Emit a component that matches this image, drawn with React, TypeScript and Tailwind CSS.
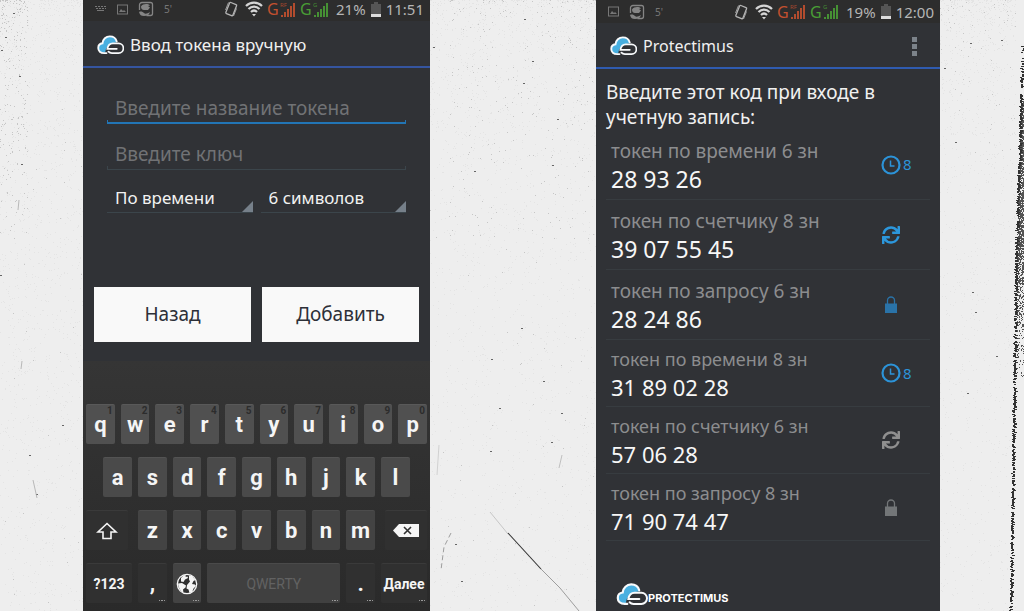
import type { ReactNode } from "react";
import { FaSync } from "react-icons/fa";
import { clsx } from "clsx";

// ──────────────────────────────────────────────────────────────────
// Data
// ──────────────────────────────────────────────────────────────────

type TokenKind = "time" | "counter" | "request";

interface Token {
  label: string;
  code: string;
  kind: TokenKind;
  active: boolean;
}

const largeTokens: Token[] = [
  { label: "токен по времени 6 зн", code: "28 93 26", kind: "time", active: true },
  { label: "токен по счетчику 8 зн", code: "39 07 55 45", kind: "counter", active: true },
  { label: "токен по запросу 6 зн", code: "28 24 86", kind: "request", active: true },
];

const compactTokens: Token[] = [
  { label: "токен по времени 8 зн", code: "31 89 02 28", kind: "time", active: true },
  { label: "токен по счетчику 6 зн", code: "57 06 28", kind: "counter", active: false },
  { label: "токен по запросу 8 зн", code: "71 90 74 47", kind: "request", active: false },
];

// ──────────────────────────────────────────────────────────────────
// Paper background
// ──────────────────────────────────────────────────────────────────

function createRandom(seed: number) {
  let s = seed;
  return () => {
    s = (s * 16807) % 2147483647;
    return s / 2147483647;
  };
}

// Scatters 1px specks in a box, denser towards its top
function specks(seed: number, count: number, x: number, y: number, w: number, h: number, bias = 1) {
  const rnd = createRandom(seed);
  let d = "";
  for (let i = 0; i < count; i++) {
    const px = x + Math.floor(rnd() * w);
    const py = y + Math.floor(Math.pow(rnd(), bias) * h);
    d += `M${px} ${py}h1v1h-1z`;
  }
  return d;
}

// The torn black edge that runs down the right side
function tornEdge() {
  const rnd = createRandom(77);
  let line = "";
  let fill = "";
  for (let y = 44; y < 611; y += 1) {
    const edge = y < 230 ? 1022 - (y - 44) * 0.029 : 1016 - (y - 230) * 0.015;
    const left = Math.round(edge + rnd() * 2 - 1);
    if (rnd() > (y < 95 ? 0.5 : 0.15)) {
      line += `M${left} ${y}h${rnd() > 0.5 ? 3 : 2}v1h-3z`;
    }
    if (y > 100 && y < 385) {
      const density = y < 260 ? 0.75 : 0.6 * (1 - (y - 260) / 125);
      for (let x = left + 2; x < 1024; x++) {
        if (rnd() < density) fill += `M${x} ${y}h1v1h-1z`;
      }
    }
  }
  return { line, fill };
}

const faintSpecks =
  specks(11, 1500, 0, 0, 83, 611, 1.5) +
  specks(12, 2200, 430, 0, 166, 611, 1.7) +
  specks(13, 1300, 940, 0, 76, 611, 1.8);
const greySpecks =
  specks(21, 200, 0, 0, 28, 240, 1.8) +
  specks(22, 240, 450, 0, 146, 240, 1.5) +
  specks(23, 40, 430, 200, 166, 411) +
  specks(24, 60, 940, 0, 76, 160, 1.6) +
  specks(25, 30, 0, 80, 83, 530);
const edge = tornEdge();

const darkSpots = [
  [19, 76], [5, 37], [1, 50], [13, 13], [21, 164], [0, 275], [29, 455], [36, 494], [62, 425],
  [433, 47], [474, 171], [524, 19], [523, 83], [557, 119], [552, 165], [521, 328], [491, 359],
  [561, 413], [551, 442], [490, 451], [499, 408], [543, 381], [461, 581], [455, 544], [532, 61],
  [944, 68], [970, 43], [1001, 40], [955, 142], [972, 292], [975, 312], [996, 356], [967, 393],
];

function PaperTexture() {
  return (
    <svg
      aria-hidden="true"
      viewBox="0 0 1024 611"
      preserveAspectRatio="none"
      className="absolute inset-0 h-full w-full"
      shapeRendering="crispEdges"
    >
      <path d={faintSpecks} fill="#e4e4e4" />
      <path d={greySpecks} fill="#c6c6c6" />
      <path d={edge.fill} fill="#555" />
      <path d={edge.line} fill="#333" />
      {darkSpots.map(([x, y]) => (
        <rect key={`${x}-${y}`} x={x} y={y} width="2" height="1" fill="#666" />
      ))}
      <g fill="none" shapeRendering="auto">
        <path d="M490 512L508 534" stroke="#b5b5b5" strokeWidth="0.7" />
        <path d="M508 533L541 569" stroke="#333" strokeWidth="1.1" />
        <path d="M541 569L560 588L579 611" stroke="#888" strokeWidth="0.8" />
        <path d="M451 533L444 547L441 570" stroke="#888" strokeWidth="0.8" strokeDasharray="5 3" />
        <path d="M439 445L437 475" stroke="#c4c4c4" strokeWidth="0.7" />
        <path d="M562 455L559 468" stroke="#aaa" strokeWidth="0.7" />
        <path d="M19 200L18 210M22 361L21 369M33 480L37 498" stroke="#aaa" strokeWidth="0.8" />
      </g>
    </svg>
  );
}

// ──────────────────────────────────────────────────────────────────
// Icons
// ──────────────────────────────────────────────────────────────────

function CloudLogo({ className }: { className: string }) {
  return (
    <svg viewBox="0 0 30 22" className={className} fill="none" aria-hidden="true">
      <path
        d="M8 19.500C4 19.500 1.500 17.500 1.500 14.300c0-2.900 2-4.900 4.600-5.200C6.500 4.500 10 1.500 14.200 1.500c4.200 0 7.400 2.700 7.900 6.500l-6 1-6 6-1 4z"
        fill="#48afe0"
      />
      <path
        d="M10.500 20H8c-4.200 0-6.600-2.300-6.600-5.700 0-2.900 2-4.900 4.700-5.200C6.500 4.500 10 1.400 14.200 1.400c3.800 0 6.800 2.200 7.700 5.600"
        stroke="#f8fafc"
        strokeWidth="2.100"
        strokeLinecap="round"
      />
      <path d="M18 10h6a4.600 4.600 0 0 1 0 10h-9l-3-4z" fill="#303236" />
      <path
        d="M22 15.300H11.500c.7-3.800 2.900-6 6-6H24a5.300 5.300 0 0 1 0 10.700h-7.500c-1.600 0-2.800-.5-3.800-1.600"
        stroke="#f8fafc"
        strokeWidth="1.900"
        strokeLinecap="round"
      />
    </svg>
  );
}

function SignalBars({ tag, className }: { tag: string; className: string }) {
  return (
    <svg viewBox="0 0 17 17" className={clsx("h-[17px] w-[17px]", className)} fill="currentColor" aria-hidden="true">
      <text x="0" y="6" fontSize="6" fontFamily="Noto Sans, sans-serif" opacity="0.8">
        {tag}
      </text>
      <path d="M1 14h2v2H1zM4 11h2v5H4zM7 8h2v8H7zM10 5h2v11h-2zM13 2h2v14h-2z" opacity="0.9" />
    </svg>
  );
}

function ClockIcon() {
  return (
    <svg viewBox="0 0 20 20" className="size-5" fill="none" stroke="currentColor" aria-hidden="true">
      <circle cx="10" cy="10" r="8.500" strokeWidth="2.200" />
      <path d="M9.500 5.500V11h4" strokeWidth="1.500" />
    </svg>
  );
}

function LockIcon({ className }: { className: string }) {
  return (
    <svg viewBox="0 0 12 17" className={className} aria-hidden="true">
      <path d="M2.500 8V4.500a3.500 3.500 0 0 1 7 0V8" fill="none" stroke="currentColor" strokeWidth="1.300" />
      <path d="M0 7.500h12V17H0z" fill="currentColor" />
    </svg>
  );
}

function TokenIcon({ kind, active }: { kind: TokenKind; active: boolean }) {
  if (kind === "time") {
    return (
      <span className="flex items-center gap-[2px] text-[15px] text-[#2c93d8]">
        <ClockIcon />8
      </span>
    );
  }
  if (kind === "counter") {
    return <FaSync className={clsx("mx-px size-[18px]", active ? "text-[#2c97dc]" : "text-[#8f8f8f]")} />;
  }
  return <LockIcon className={clsx("mx-1 h-[17px] w-3", active ? "text-[#2a73a8]" : "text-[#737678]")} />;
}

// ──────────────────────────────────────────────────────────────────
// Status bar
// ──────────────────────────────────────────────────────────────────

function StatusBar({ battery, time, keyboard, className }: { battery: string; time: string; keyboard?: boolean; className: string }) {
  return (
    <div className={clsx("flex items-center justify-between bg-[#2d2d2d] pr-[6px] pl-3 text-[#b5b5b5]", className)}>
      <div className="flex items-center gap-[10px] text-[#777]">
        {keyboard && (
          <svg viewBox="0 0 12 8" className="h-2 w-3" fill="currentColor" aria-hidden="true">
            <path d="M0 1h2v1H0zM3 1h2v1H3zM6 1h2v1H6zM9 1h2v1H9zM1 3h2v1H1zM4 3h2v1H4zM7 3h2v1H7zM10 3h1v1h-1zM2 5h7v1H2z" />
          </svg>
        )}
        <svg viewBox="0 0 11 11" className="size-[11px]" fill="none" aria-hidden="true">
          <rect x="0.500" y="1" width="10" height="9" stroke="currentColor" />
          <path d="M2 8l2-3 2 2 1-1 2 2z" fill="currentColor" />
        </svg>
        <svg viewBox="0 0 16 16" className="size-4" fill="none" aria-hidden="true">
          <path d="M4 1.500h8.500a2 2 0 0 1 2 2v9a2 2 0 0 1-2 2h-4M1.500 9V4a2.500 2.500 0 0 1 2.500-2.500" stroke="#858585" strokeWidth="1.300" />
          <path d="M3 5.500C5 2.500 10 2.500 12 4.500l-2 .5 2 1.500-2 2.500H6c-2 0-3-1.500-3-3.500z" fill="#858585" />
          <path d="M1 11c2-1 4 0 5 1s3 1 6-1c-1 3-3 4-6 4s-4-1-5-4z" fill="#858585" />
        </svg>
        <span className="text-[10px] leading-4">5'</span>
      </div>
      <div className="flex items-center">
        <svg viewBox="0 0 16 18" className="mr-[6px] h-[18px] w-4" fill="none" stroke="currentColor" aria-hidden="true">
          <rect x="4.500" y="3" width="7.500" height="12" rx="1" transform="rotate(22 8 9)" strokeWidth="1.300" />
          <path d="M2.500 10l3-7.500M10.500 16l3-7.500" strokeWidth="0.800" />
        </svg>
        <svg viewBox="0 0 18 16" className="mr-1 h-4 w-[18px]" fill="none" stroke="#d5d5d5" aria-hidden="true">
          <path d="M1 5C5.500.500 12.500.500 17 5M3.500 8c3.200-3.200 7.800-3.200 11 0M6 11c1.800-1.800 4.200-1.800 6 0" strokeWidth="2.200" />
          <path d="M7 13h4l-2 2.500z" fill="#d5d5d5" stroke="none" />
        </svg>
        <span className="w-[13px] text-base leading-5 text-[#c2502f]">G</span>
        <SignalBars tag="RF" className="mr-[3px] text-[#c2502f]" />
        <span className="w-[13px] text-base leading-5 text-[#499c35]">G</span>
        <SignalBars tag="G" className="mr-[6px] text-[#499c35]" />
        <span className="mr-[5px] text-[15px] leading-5">{battery}</span>
        <svg viewBox="0 0 10 15" className="mr-[5px] h-[15px] w-[10px]" aria-hidden="true">
          <path d="M3 0h4v2h3v10H0V2h3z" fill="#555" />
          <path d="M0 12h10v3H0z" fill="#ddd" />
        </svg>
        <span className="text-[15px] leading-5">{time}</span>
      </div>
    </div>
  );
}

// ──────────────────────────────────────────────────────────────────
// Manual token form
// ──────────────────────────────────────────────────────────────────

function TextField({ label, focused }: { label: string; focused?: boolean }) {
  return (
    <div>
      <input
        type="text"
        aria-label={label}
        placeholder={label}
        className="block h-7 w-full bg-transparent px-2 pt-1 text-[19px] text-white outline-none placeholder:text-[#717275]"
      />
      <div className={clsx("h-1 border-x", focused ? "border-b-2 border-[#2275b5]" : "border-b border-[#3b454b]")} />
    </div>
  );
}

function SelectField({ label, options }: { label: string; options: string[] }) {
  return (
    <div className="relative flex-1 border-b border-[#3b454b]">
      <select aria-label={label} className="block h-7 w-full appearance-none bg-transparent px-2 text-[17px] text-[#f2f2f2] outline-none">
        {options.map((option) => (
          <option key={option}>{option}</option>
        ))}
      </select>
      <svg viewBox="0 0 11 11" className="pointer-events-none absolute right-0 bottom-0 size-[11px]" aria-hidden="true">
        <path d="M11 0v11H0z" fill="#76808a" />
      </svg>
    </div>
  );
}

// ──────────────────────────────────────────────────────────────────
// Keyboard
// ──────────────────────────────────────────────────────────────────

interface KeyProps {
  children: ReactNode;
  label?: string;
  hint?: string;
  more?: boolean;
  className?: string;
}

function Key({ children, label, hint, more, className = "col-span-2 bg-[#4a4a4a] text-[22px]" }: KeyProps) {
  return (
    <button
      type="button"
      aria-label={label}
      className={clsx("relative flex h-10 items-center justify-center rounded-[2px] border-t border-white/5 font-bold text-[#f5f5f5]", className)}
    >
      {children}
      {hint && <span className="absolute top-0 right-[2px] text-[10px] leading-3 text-[#2c2c2c]">{hint}</span>}
      {more && (
        <svg viewBox="0 0 6 1" className="absolute right-[2px] bottom-[2px] h-px w-[6px]" aria-hidden="true">
          <path d="M0 0h1v1H0zM2 0h2v1H2zM5 0h1v1H5z" fill="#999" />
        </svg>
      )}
    </button>
  );
}

function Keyboard() {
  return (
    <div className="flex flex-1 flex-col gap-[13px] bg-gradient-to-b from-[#353535] to-[#2a2a2a] px-[3px] pt-[43px] pb-2 font-[Roboto,sans-serif]">
      <div className="grid grid-cols-20 gap-x-[6px]">
        {"qwertyuiop".split("").map((letter, i) => (
          <Key key={letter} hint={String((i + 1) % 10)} className="col-span-2 bg-[#505050] text-[22px]">
            {letter}
          </Key>
        ))}
      </div>
      <div className="grid grid-cols-20 gap-x-[6px]">
        <span />
        {"asdfghjkl".split("").map((letter) => (
          <Key key={letter}>{letter}</Key>
        ))}
      </div>
      <div className="grid grid-cols-20 gap-x-[6px]">
        <Key label="Shift" className="col-span-3 mr-1 bg-[#303030]">
          <svg viewBox="0 0 22 18" className="h-[18px] w-[22px]" fill="none" stroke="currentColor" strokeWidth="1.600" aria-hidden="true">
            <path d="M11 1.500L20 10h-5v6.500H7V10H2z" />
          </svg>
        </Key>
        {"zxcvbnm".split("").map((letter) => (
          <Key key={letter} className="col-span-2 bg-[#434343] text-[22px]">
            {letter}
          </Key>
        ))}
        <Key label="Backspace" className="col-span-3 ml-1 bg-[#303030]">
          <svg viewBox="0 0 26 13" className="h-[13px] w-[26px]" aria-hidden="true">
            <path d="M6 0h20v13H6L0 6.500z" fill="#f5f5f5" />
            <path d="M11 3l7 7M18 3l-7 7" stroke="#303030" strokeWidth="1.600" />
          </svg>
        </Key>
      </div>
      <div className="grid grid-cols-20 gap-x-[6px]">
        <Key className="col-span-3 bg-[#303030] text-sm">?123</Key>
        <Key more className="col-span-2 bg-[#303030] text-[22px]">,</Key>
        <Key more label="Язык" className="col-span-2 bg-[#434343]">
          <svg viewBox="0 0 22 22" className="size-[22px]" aria-hidden="true">
            <circle cx="11" cy="11" r="9.700" fill="#303030" stroke="#f5f5f5" strokeWidth="1.300" />
            <path
              d="M2 10.500l4-.500 4 2.500-.500 2-2.500 2 .500 3.500-3-2.500-2-4zM5 5l3-3 2 .500-.500 1.500 2-.500.500 1.500L9 6.500 7.500 9 5 8.500zM13 2.500l3 .500 3.500 4-2 1-1.500 3 3 .500 1 1.500-2.500 2.500-1.500 4-2.500.500-1-3.500-2-1 .500-3.500 3-3.500-1-2z"
              fill="#f5f5f5"
            />
          </svg>
        </Key>
        <Key more label="Пробел" className="col-span-8 bg-[#404040] text-sm">
          <span className="font-normal text-[#626262]">QWERTY</span>
        </Key>
        <Key more className="col-span-2 bg-[#303030] text-[22px]">.</Key>
        <Key more className="col-span-3 bg-[#303030] text-sm">Далее</Key>
      </div>
    </div>
  );
}

function ManualEntryScreen() {
  return (
    <section className="flex flex-col bg-[#303236]">
      <StatusBar battery="21%" time="11:51" keyboard className="h-[21px] pb-[3px]" />
      <header className="flex h-[47px] items-center gap-[6px] border-b-2 border-[#3555a0] px-[14px] pt-[2px]">
        <CloudLogo className="h-5 w-[27px]" />
        <h1 className="text-[17px] leading-6 text-[#f0f0f0]">Ввод токена вручную</h1>
      </header>
      <form>
        <div className="flex flex-col gap-[14px] px-6 pt-6">
          <TextField label="Введите название токена" focused />
          <TextField label="Введите ключ" />
          <div className="flex gap-2">
            <SelectField label="Тип токена" options={["По времени", "По счетчику", "По запросу"]} />
            <SelectField label="Длина кода" options={["6 символов", "8 символов"]} />
          </div>
        </div>
        <div className="flex gap-[11px] px-[11px] pt-[74px] pb-[19px]">
          <button type="button" className="h-[55px] flex-1 bg-[#f9f9f9] text-[19px] text-[#2d3038]">Назад</button>
          <button type="button" className="h-[55px] flex-1 bg-[#f9f9f9] text-[19px] text-[#2d3038]">Добавить</button>
        </div>
      </form>
      <Keyboard />
    </section>
  );
}

// ──────────────────────────────────────────────────────────────────
// Token list
// ──────────────────────────────────────────────────────────────────

function TokenRow({ token, compact }: { token: Token; compact?: boolean }) {
  return (
    <li className={clsx("flex items-center justify-between border-b border-[#373c40] pr-[18px] pl-[5px]", compact ? "h-[67px]" : "h-[70px]")}>
      <div>
        <p className={clsx("leading-7 text-[#8c8d8f]", compact ? "text-lg" : "text-[19px]")}>{token.label}</p>
        <p className={clsx("leading-7 text-[#f7f7f7]", compact ? "text-[22px]" : "text-[23px]")}>{token.code}</p>
      </div>
      <div className="flex w-[31px] items-center">
        <TokenIcon kind={token.kind} active={token.active} />
      </div>
    </li>
  );
}

function TokenListScreen() {
  return (
    <section className="flex flex-col bg-[#303236]">
      <StatusBar battery="19%" time="12:00" className="h-[23px]" />
      <header className="flex h-[46px] items-center gap-[6px] border-b-2 border-[#2f5bb0] px-[14px] pt-[2px]">
        <CloudLogo className="h-5 w-[27px]" />
        <h1 className="flex-1 text-base leading-6 text-[#f0f0f0]">Protectimus</h1>
        <button type="button" aria-label="Меню" className="flex w-6 flex-col items-center gap-[2px]">
          <span className="size-[5px] bg-[#7c838a]" />
          <span className="size-[5px] bg-[#7c838a]" />
          <span className="size-[5px] bg-[#7c838a]" />
        </button>
      </header>
      <div className="px-[10px] pt-[11px]">
        <h2 className="text-[19px] leading-[25px] text-[#f0f0f0]">Введите этот код при входе в учетную запись:</h2>
      </div>
      <ul className="px-[10px]">
        {largeTokens.map((token) => (
          <TokenRow key={token.label} token={token} />
        ))}
        {compactTokens.map((token) => (
          <TokenRow key={token.label} token={token} compact />
        ))}
      </ul>
      <footer className="mt-auto flex items-end px-5 pt-4 pb-[5px]">
        <CloudLogo className="h-[23px] w-8" />
        <span className="font-[Inter,sans-serif] text-[11px] leading-4 font-bold text-white">PROTECTIMUS</span>
      </footer>
    </section>
  );
}

export default function App() {
  return (
    <main className="relative min-h-screen bg-[#eeeeee] font-['Noto_Sans',sans-serif]">
      <PaperTexture />
      <div className="relative grid min-h-screen grid-cols-[83fr_347fr_166fr_344fr_84fr]">
        <div />
        <ManualEntryScreen />
        <div />
        <TokenListScreen />
        <div />
      </div>
    </main>
  );
}
